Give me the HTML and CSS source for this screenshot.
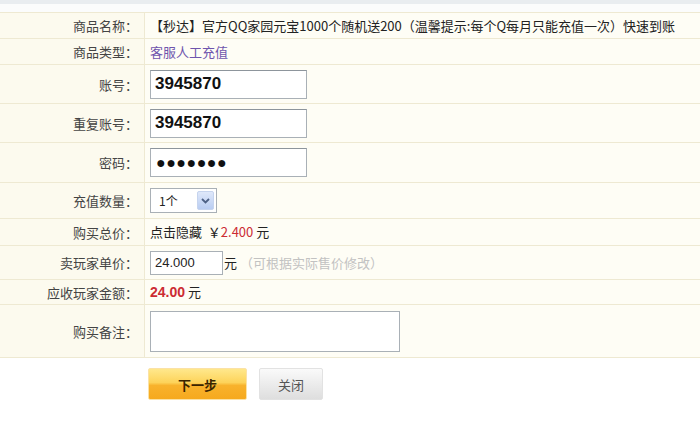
FILE: index.html
```html
<!DOCTYPE html>
<html lang="zh-CN">
<head>
<meta charset="utf-8">
<title>商品购买</title>
<link rel="stylesheet" href="styles.css">
</head>
<body>
<div class="topbar"></div>
<div class="topgap"></div>
<table class="form">
  <tr class="r-name">
    <th>商品名称：</th>
    <td>【秒达】官方QQ家园元宝1000个随机送200（温馨提示:每个Q每月只能充值一次）快速到账</td>
  </tr>
  <tr class="r-type">
    <th>商品类型：</th>
    <td><a class="typelink">客服人工充值</a></td>
  </tr>
  <tr class="r-input">
    <th>账号：</th>
    <td><input class="acct" type="text" value="3945870"></td>
  </tr>
  <tr class="r-input">
    <th>重复账号：</th>
    <td><input class="acct" type="text" value="3945870"></td>
  </tr>
  <tr class="r-pass">
    <th>密码：</th>
    <td><input class="acct pass" type="text" value="●●●●●●●"></td>
  </tr>
  <tr class="r-qty">
    <th>充值数量：</th>
    <td>
      <div class="selbox">
        <span class="seltext">1个</span>
        <span class="selbtn"><svg width="9" height="6" viewBox="0 0 9 6"><path d="M1 1 L4.5 4.5 L8 1" fill="none" stroke="#4d6185" stroke-width="1.8"/></svg></span>
      </div>
    </td>
  </tr>
  <tr class="r-total">
    <th>购买总价：</th>
    <td>点击隐藏&nbsp;&nbsp;￥<span class="red">2.400</span> 元</td>
  </tr>
  <tr class="r-unit">
    <th>卖玩家单价：</th>
    <td><input class="price" type="text" value="24.000"><span class="yuan">元</span><span class="hint">（可根据实际售价修改）</span></td>
  </tr>
  <tr class="r-recv">
    <th>应收玩家金额：</th>
    <td><b class="red big">24.00</b> 元</td>
  </tr>
  <tr class="r-note">
    <th>购买备注：</th>
    <td><textarea class="note"></textarea></td>
  </tr>
</table>
<div class="actions">
  <button class="btn next">下一步</button>
  <button class="btn close">关闭</button>
</div>
</body>
</html>
```

FILE: styles.css
```css
html, body {
  margin: 0;
  padding: 0;
  background: #ffffff;
  font-family: "Noto Sans CJK SC", "Liberation Sans", sans-serif;
  font-size: 13px;
  color: #222;
}
.topbar {
  height: 4px;
  background: #e9edf0;
}
.topgap {
  height: 8px;
  background: #fbfcfc;
}
.form {
  width: 100%;
  border-collapse: collapse;
  border-top: 1px solid #eee9d2;
}
.form th,
.form td {
  border-bottom: 1px solid #eee9d2;
  padding: 0;
  vertical-align: middle;
}
.form th {
  width: 138px;
  padding-right: 6px;
  text-align: right;
  font-weight: normal;
  color: #444;
  font-size: 13px;
  background: #fcfaee;
  border-right: 1px solid #eee9d2;
}
.form td {
  padding-left: 5px;
  background: #fefdf5;
  white-space: nowrap;
  line-height: 16px;
}
.r-name th, .r-name td { height: 25px; }
.r-type th, .r-type td { height: 25px; }
.r-input th, .r-input td { height: 38px; }
.r-pass th, .r-pass td { height: 39px; }
.r-qty th, .r-qty td { height: 35px; }
.r-total th, .r-total td { height: 26px; }
.r-unit th, .r-unit td { height: 33px; }
.r-recv th, .r-recv td { height: 24px; }
.r-note th, .r-note td { height: 52px; }

.typelink {
  color: #6f55ad;
  text-decoration: none;
}
.acct {
  display: block;
  box-sizing: border-box;
  width: 157px;
  height: 29px;
  margin: 0;
  padding: 0 4px;
  border: 1px solid #a9b0b6;
  border-top-color: #8d959c;
  background: #fff;
  font-family: "Liberation Sans", Arial, sans-serif;
  font-weight: bold;
  font-size: 17px;
  color: #111;
}
.pass {
  font-size: 16px;
  letter-spacing: 0.5px;
  padding-left: 5px;
}
.selbox {
  display: flex;
  align-items: center;
  box-sizing: border-box;
  width: 67px;
  height: 25px;
  border: 1px solid #a9b0b6;
  background: #fff;
  padding: 0 2px 0 8px;
}
.seltext {
  flex: 1;
  font-size: 12px;
  color: #222;
}
.selbtn {
  display: flex;
  align-items: center;
  justify-content: center;
  width: 15px;
  height: 17px;
  background: linear-gradient(#dfe8fa, #b9cdf2);
  border: 1px solid #c6d4ee;
  border-radius: 2px;
}
.red {
  color: #cc2b33;
}
.big {
  font-family: "Liberation Sans", Arial, sans-serif;
  font-size: 14px;
}
.price {
  box-sizing: border-box;
  width: 73px;
  height: 24px;
  margin: 0;
  padding: 0 4px;
  vertical-align: middle;
  border: 1px solid #a9b0b6;
  background: #fff;
  font-family: "Liberation Sans", Arial, sans-serif;
  font-size: 13px;
  color: #222;
}
.yuan {
  vertical-align: middle;
  margin-left: 1px;
}
.hint {
  vertical-align: middle;
  color: #c2c2c2;
  margin-left: 3px;
}
.note {
  display: block;
  box-sizing: border-box;
  width: 250px;
  height: 41px;
  margin: 0;
  border: 1px solid #a9b0b6;
  background: #fff;
  resize: none;
}
.actions {
  display: flex;
  gap: 12px;
  padding: 10px 0 0 148px;
}
.btn {
  height: 32px;
  margin: 0;
  font-family: "Noto Sans CJK SC", sans-serif;
  font-size: 13px;
  cursor: pointer;
}
.next {
  width: 99px;
  border: 1px solid #fbe2a6;
  border-radius: 2px;
  background: linear-gradient(#ffe88c 0%, #fdd35a 45%, #f8b22c 55%, #f6a91e 100%);
  color: #3a2400;
  font-weight: bold;
}
.close {
  width: 64px;
  border: 1px solid #e2e2e2;
  border-radius: 2px;
  background: linear-gradient(#fafafa, #dedede);
  color: #555;
}
```
